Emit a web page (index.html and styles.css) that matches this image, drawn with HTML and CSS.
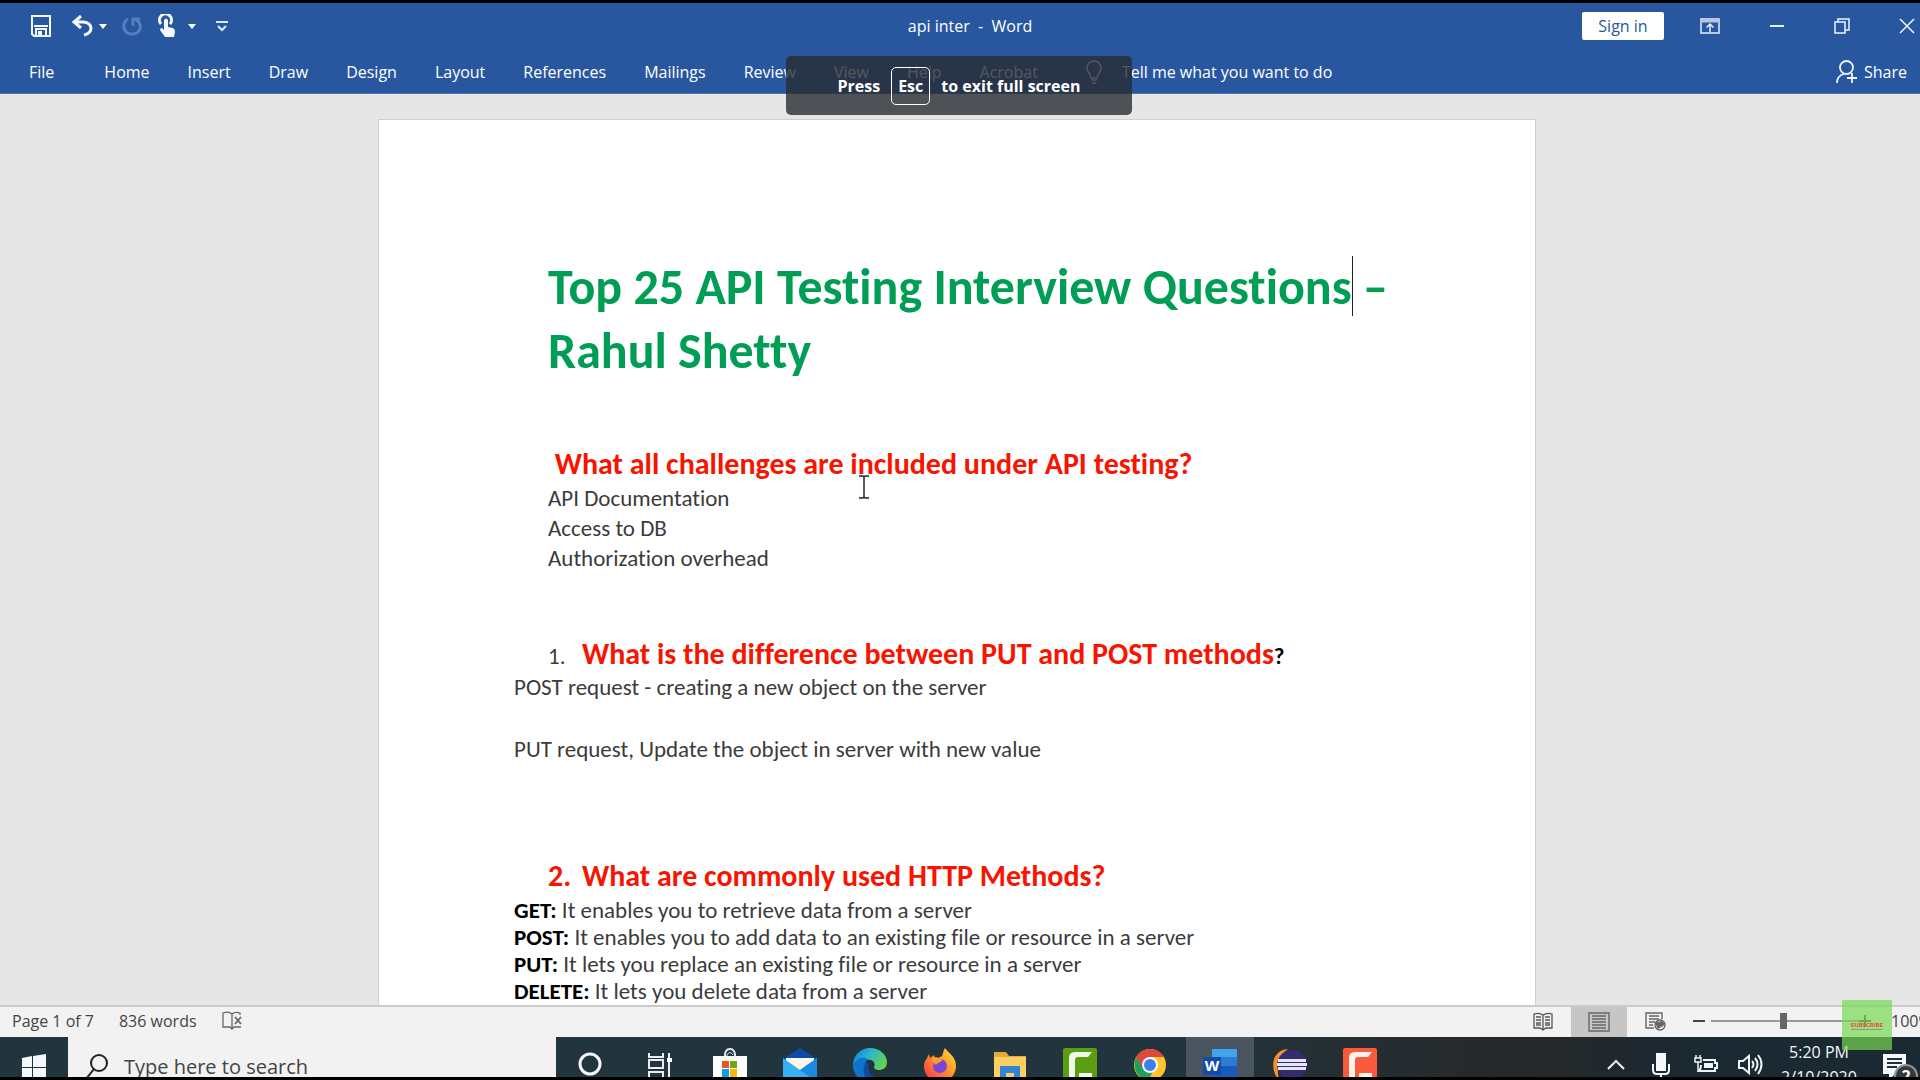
FILE: index.html
```html
<!DOCTYPE html>
<html lang="en">
<head>
<meta charset="utf-8">
<meta name="viewport" content="width=device-width, initial-scale=1">
<title>api inter - Word</title>
<link rel="stylesheet" href="styles.css">
</head>
<body>
<div class="screen">
  <header class="ribbon">
    <div class="titlebar">
      <div class="quick">
        <button class="icon-btn save" aria-label="Save"><svg width="20" height="22" viewBox="0 0 20 22" fill="none" stroke="#f4f8ff" stroke-width="2"><path d="M1 1h18v20H3l-2-2z"/><path d="M3 11h14M5 21v-7h10v7"/><path d="M8 21v-4h2v4"/></svg></button>
        <button class="icon-btn undo" aria-label="Undo"><svg width="22" height="22" viewBox="0 0 22 22" fill="none" stroke="#f4f8ff" stroke-width="3"><path d="M10 1L3 7l7 6M3 7h9c5 0 8 3 8 6 0 4-3 6-7 7"/></svg></button>
        <button class="icon-btn undo-more" aria-label="Undo options"><svg width="8" height="5" viewBox="0 0 8 5" fill="#fff"><path d="M0 0h8L4 5z"/></svg></button>
        <button class="icon-btn redo" aria-label="Redo"><svg width="20" height="20" viewBox="0 0 20 20" fill="none" stroke="#5580bf" stroke-width="3"><path d="M6 3C-1 7 1 18 10 18s11-10 4-14M11 10V3h7"/></svg></button>
        <button class="icon-btn touch" aria-label="Touch mode"><svg width="18" height="24" viewBox="0 0 18 24"><path d="M3 10a6 6 0 1 1 9 0" fill="none" stroke="#f4f8ff" stroke-width="3"/><path d="M6 6q2-3 4 0v7l5 1q2 1 2 4l-1 5H7l-5-7q0-2 2-2l2 2z" fill="#f4f8ff"/></svg></button>
        <button class="icon-btn touch-more" aria-label="Touch options"><svg width="8" height="5" viewBox="0 0 8 5" fill="#fff"><path d="M0 0h8L4 5z"/></svg></button>
        <button class="icon-btn" aria-label="Customize toolbar"><svg width="12" height="11" viewBox="0 0 12 11" fill="none" stroke="#dfeaff" stroke-width="2"><path d="M0 1h12"/><path d="M2 5l4 4 4-4"/></svg></button>
      </div>
      <div class="doc-name">api inter&nbsp; -&nbsp; Word</div>
      <div class="window-tools">
        <button class="signin">Sign in</button>
        <button class="icon-btn" aria-label="Ribbon display options"><svg width="20" height="16" viewBox="0 0 20 16" fill="none" stroke="#e4eeff" stroke-width="1.5"><path d="M1 1h18v14H1z"/><path d="M1 3h18" stroke-width="3" stroke="#b9c5d8"/><path d="M10 14V6M6.500 9.500L10 6l3.500 3.500"/></svg></button>
        <button class="icon-btn" aria-label="Minimize"><svg width="16" height="16" viewBox="0 0 16 16"><path d="M1 8h14" stroke="#e4eeff" stroke-width="2"/></svg></button>
        <button class="icon-btn" aria-label="Restore"><svg width="16" height="16" viewBox="0 0 16 16" fill="none" stroke="#f0f5ff" stroke-width="1.500"><path d="M1 4h10v11H1zM4 4V1h11v11h-4"/></svg></button>
        <button class="icon-btn" aria-label="Close"><svg width="16" height="16" viewBox="0 0 16 16" stroke="#f0f5ff" stroke-width="1.500"><path d="M1 1l14 14M15 1L1 15"/></svg></button>
      </div>
    </div>
    <div class="tabrow">
      <nav class="tabs">
        <a class="file" href="#">File</a><a href="#">Home</a><a href="#">Insert</a><a href="#">Draw</a><a href="#">Design</a><a href="#">Layout</a><a href="#">References</a><a href="#">Mailings</a><a href="#">Review</a><a href="#">View</a><a href="#">Help</a><a href="#">Acrobat</a>
      </nav>
      <label class="tell">
        <svg width="16" height="24" viewBox="0 0 16 24" fill="none" stroke="#fff" stroke-width="1.500"><path d="M5 18c0-5-4-5-4-10a7 7 0 0 1 14 0c0 5-4 5-4 10zM5 20h6M6 23h4"/></svg>
        <input type="text" placeholder="Tell me what you want to do" aria-label="Tell me what you want to do">
      </label>
      <button class="share"><svg width="22" height="24" viewBox="0 0 22 24" fill="none" stroke="#f0f5ff" stroke-width="1.800"><ellipse cx="10.500" cy="7.500" rx="6.500" ry="6.500"/><path d="M1 23c0-5 3-8 7-9M16 13v10M11 18h10"/></svg>Share</button>
    </div>
  </header>

  <main class="canvas">
    <article class="page">
      <h1>Top 25 API Testing Interview Questions<span class="caret"></span> – Rahul Shetty</h1>
      <section class="intro">
        <h2>&nbsp;What all challenges are included under API testing?</h2>
        <p>API Documentation</p>
        <p>Access to DB</p>
        <p>Authorization overhead</p>
        <span class="ibeam"><svg width="12" height="24" viewBox="0 0 12 24" fill="none" stroke="#222" stroke-width="1.500"><path d="M1 1h4l1 1 1-1h4M6 2v20M1 23h4l1-1 1 1h4"/></svg></span>
      </section>
      <section class="methods">
        <h2><span class="num plain">1.</span><span>What is the difference between PUT and POST methods<span class="mark">?</span></span></h2>
        <p>POST request - creating a new object on the server</p>
        <p class="spaced">PUT request, Update the object in server with new value</p>
      </section>
      <section class="http">
        <h2><span class="num">2.</span><span>What are commonly used HTTP Methods?</span></h2>
        <p><b>GET:</b> It enables you to retrieve data from a server</p>
        <p><b>POST:</b> It enables you to add data to an existing file or resource in a server</p>
        <p><b>PUT:</b> It lets you replace an existing file or resource in a server</p>
        <p><b>DELETE:</b> It lets you delete data from a server</p>
      </section>
    </article>
  </main>

  <footer class="status">
    <span class="pages">Page 1 of 7</span>
    <span class="words">836 words</span>
    <button class="icon-btn" aria-label="Proofing"><svg width="21" height="20" viewBox="0 0 21 20" fill="none" stroke="#666" stroke-width="1.300"><path d="M10 3v14M10 3C8 1 4 1 1 2v14h7l2 2 2-2h7M10 3c2-2 5-2 8-1v2"/><path d="M13 6l6 7M19 6l-6 7" stroke-width="1.800"/></svg></button>
    <div class="views">
      <button aria-label="Read mode"><svg width="20" height="20" viewBox="0 0 20 20" fill="none" stroke="#555" stroke-width="1.300"><path d="M10 3v15M10 3C7 1 4 1 1 2v14h6l3 2 3-2h6V2c-3-1-6-1-9 1zM3 5h5M3 8h5M3 11h5M3 13h5M12 5h5M12 8h5M12 11h5M12 13h5"/></svg></button>
      <button class="active" aria-label="Print layout"><svg width="22" height="20" viewBox="0 0 22 20" fill="none" stroke="#666" stroke-width="1.400"><path d="M1 1h20v18H1zM4 4h14M4 7h14M4 10h14M4 13h14M4 16h14"/></svg></button>
      <button aria-label="Web layout"><svg width="21" height="20" viewBox="0 0 21 20" fill="none" stroke="#666" stroke-width="1.400"><path d="M17 7V1H1v15h8M4 4h10M4 7h10M4 10h6M4 13h4"/><circle cx="15" cy="13" r="5"/><path d="M11 11l3-1 2 2-1 3-2 1zM16 9l3 3-2 2z" fill="#666"/></svg></button>
    </div>
    <div class="zoom">
      <button class="minus" aria-label="Zoom out"><svg width="12" height="12" viewBox="0 0 12 12"><path d="M0 6h12" stroke="#444" stroke-width="2"/></svg></button>
      <input type="range" min="0" max="100" value="49" aria-label="Zoom">
      <button class="plus" aria-label="Zoom in"><svg width="12" height="12" viewBox="0 0 12 12"><path d="M0 6h12M6 0v12" stroke="#444" stroke-width="2"/></svg></button>
      <span class="pct">100%</span>
    </div>
    <div class="subscribe"><span>SUBSCRIBE</span></div>
  </footer>

  <div class="taskbar">
    <button class="start" aria-label="Start"><svg width="24" height="26" viewBox="0 0 24 26" fill="#f4f8fb"><path d="M0 4l10-2v11H0zM11 2l13-2v13H11zM0 14h10v11L0 23zM11 14h13v12l-13-1z"/></svg></button>
    <label class="search">
      <svg width="22" height="28" viewBox="0 0 22 28" fill="none" stroke="#222" stroke-width="2"><circle cx="13" cy="9" r="8"/><path d="M8 15L0 25"/></svg>
      <input type="text" placeholder="Type here to search" aria-label="Search">
    </label>
    <div class="apps">
      <button aria-label="Cortana"><svg width="24" height="30" viewBox="0 0 24 30"><circle cx="12" cy="16" r="10" fill="none" stroke="#f4f8fb" stroke-width="3"/></svg></button>
      <button aria-label="Task view"><svg width="26" height="30" viewBox="0 0 26 30" fill="none" stroke="#e8eef2" stroke-width="2"><path d="M2 5v4h14V5M2 12h14v8H2zM2 30v-6h14v6M22 5v25"/><path d="M20 10h5v4h-5z" fill="#fff" stroke="none"/></svg></button>
      <button aria-label="Store"><svg width="34" height="34" viewBox="0 0 34 34"><path d="M12 10V6q1-5 5-5t5 5v4" fill="none" stroke="#dfe6ea" stroke-width="2"/><path d="M14 10V7q3-5 6 0" fill="none" stroke="#dfe6ea"/><path d="M0 8h34v26H0z" fill="#fff"/><path d="M9 13h7v7H9z" fill="#f05022"/><path d="M17 13h7v7h-7z" fill="#6ea91b"/><path d="M9 21h7v8H9z" fill="#0aa4ea"/><path d="M17 21h7v8h-7z" fill="#fbb40a"/></svg></button>
      <button aria-label="Mail"><svg width="34" height="34" viewBox="0 0 34 34"><path d="M0 11L17 0l17 11v23H0z" fill="#0a4fa5"/><path d="M3 10h28v14H3z" fill="#fff8ec"/><path d="M0 10l17 12 17-12v24H0z" fill="#35b0f2"/><path d="M17 22l17-12v24z" fill="#1a8be0"/></svg></button>
      <button aria-label="Edge"><svg width="34" height="34" viewBox="0 0 34 34"><defs><linearGradient id="edge-top" x1="0" y1="0" x2="1" y2=".4"><stop offset="0" stop-color="#0f7fd0"/><stop offset=".5" stop-color="#2cb4cf"/><stop offset="1" stop-color="#63d052"/></linearGradient></defs><path d="M0 17C0 7 8 0 17 0c10 0 17 7 17 14 0 6-4 8-8 8-4 0-5-2-5-3 2-3-1-8-6-7C8 12 3 17 4 25 1 23 0 20 0 17z" fill="url(#edge-top)"/><path d="M0 17c3-7 10-9 15-6-4 3-4 10-1 14 3 5 9 6 14 4-3 4-7 5-11 5C7 34 0 27 0 17z" fill="#1273cd"/><path d="M13 14c-4 6-3 14 3 20h3c4 0 7-2 9-5-8 2-15-5-12-13z" fill="#0c4c9c"/></svg></button>
      <button aria-label="Firefox"><svg width="34" height="34" viewBox="0 0 34 34"><defs><linearGradient id="fox" x1="1" y1="0" x2="0" y2="1"><stop offset="0" stop-color="#ffe83c"/><stop offset=".45" stop-color="#ff9127"/><stop offset="1" stop-color="#f72b56"/></linearGradient></defs><path d="M6 6l1 4 4-3 1 4c3-2 5-1 7-3 1-2 1-5 3-8 3 5 11 8 11 18 0 9-7 16-16 16S1 27 1 18c0-5 3-7 5-12z" fill="url(#fox)"/><circle cx="17" cy="18" r="7" fill="#7a45d8"/><path d="M9 10c4-3 6 1 10 1 1 3-4 3-6 6-2-2-4-4-4-7z" fill="#ff9b2b"/></svg></button>
      <button aria-label="File Explorer"><svg width="32" height="34" viewBox="0 0 32 34"><path d="M0 4h12l3 4h17v26H0z" fill="#e5a93c"/><path d="M0 9h32v25H0z" fill="#fdcf62"/><path d="M6 34V18h20v16h-6v-9h-8v9z" fill="#2f86d6"/></svg></button>
      <button aria-label="Camtasia"><svg width="34" height="34" viewBox="0 0 34 34"><rect width="34" height="34" rx="2" fill="#5c9e12"/><path d="M29 4H12q-6 0-6 6v24h6V12q0-3 3-3h10zM29 25H16v5h13z" fill="#f1f7ea"/></svg></button>
      <button aria-label="Chrome"><svg width="32" height="34" viewBox="0 0 32 34"><circle cx="16" cy="17" r="16" fill="#fdc62c"/><path d="M2 9Q7 1 16 1t14 8H16l-7 12z" fill="#de4a3a"/><path d="M2 9C-2 18 2 30 14 33l6-12H10z" fill="#22a05a"/><circle cx="16" cy="17" r="8" fill="#f5f8ff"/><circle cx="16" cy="17" r="6" fill="#3f80ee"/></svg></button>
      <button class="current" aria-label="Word"><svg width="34" height="34" viewBox="0 0 34 34"><path d="M9 1h25v8H9z" fill="#41a5ee"/><path d="M9 9h25v9H9z" fill="#2b7cd3"/><path d="M9 18h25v16H9z" fill="#185abd"/><rect y="9" width="18" height="18" fill="#114da8"/><text x="9" y="23" text-anchor="middle" class="w-mark">W</text></svg></button>
      <button aria-label="Eclipse"><svg width="34" height="34" viewBox="0 0 34 34"><path d="M15 1C-2 2-4 22 7 34 3 24 4 9 15 1z" fill="#f3912a"/><circle cx="19" cy="17" r="15" fill="#352b70"/><path d="M5 11h28v3H5zM4 15h30v3H4zM5 19h28v3H5z" fill="#e6e6f2"/></svg></button>
      <button aria-label="Recorder"><svg width="34" height="34" viewBox="0 0 34 34"><rect width="34" height="34" rx="2" fill="#fa5a3c"/><path d="M29 4H12q-6 0-6 6v24h6V12q0-3 3-3h10zM29 25H16v5h13z" fill="#fff1ec"/></svg></button>
    </div>
    <div class="tray">
      <button aria-label="Show hidden icons"><svg width="20" height="24" viewBox="0 0 20 24" fill="none" stroke="#eef3f6" stroke-width="2"><path d="M2 17l8-8 8 8"/></svg></button>
      <button aria-label="Microphone"><svg width="18" height="26" viewBox="0 0 18 26" fill="none" stroke="#f4f8fb" stroke-width="2"><rect x="5" y="2" width="8" height="16" fill="#f4f8fb"/><path d="M1 12v6q0 4 4 4h8q4 0 4-4v-6M9 22v4"/></svg></button>
      <button aria-label="Battery"><svg width="24" height="24" viewBox="0 0 24 24" fill="none" stroke="#eef3f6" stroke-width="2"><path d="M9 8h12v3h2v5h-2v3H5q2-2 2-6"/><path d="M10 11h9v5h-9z" fill="#eef3f6" stroke="none"/><path d="M1 6h6v4H1zM4 10v9M2 3v3M6 3v3" stroke-width="1.500"/></svg></button>
      <button aria-label="Volume"><svg width="26" height="24" viewBox="0 0 26 24" fill="none" stroke="#eef3f6" stroke-width="2"><path d="M1 9h4l6-5v17l-6-5H1zM14 9q3 3 0 7M17 6q5 6 0 13M20 3q7 9 0 19"/></svg></button>
      <time class="clock">5:20 PM<br>2/10/2020</time>
      <button class="notes" aria-label="Notifications"><svg width="36" height="30" viewBox="0 0 36 30"><path d="M1 2h23v20H13l-6 6v-6H1z" fill="#f4f8fb"/><path d="M5 7h15M5 11h15M5 15h10" stroke="#22303a" stroke-width="2"/><circle cx="24" cy="24" r="11" fill="#34393d" stroke="#8d9498" stroke-width="2"/><text x="24" y="30" text-anchor="middle" class="badge">2</text></svg></button>
    </div>
  </div>

  <div class="toast" role="status"><span>Press</span><kbd>Esc</kbd><span>to exit full screen</span></div>
</div>
</body>
</html>
```
FILE: styles.css
```css
* { box-sizing: border-box; }

body {
  margin: 0;
  font: 16px/24px "Open Sans", "Noto Sans", sans-serif;
}

button, input {
  margin: 0;
  padding: 0;
  border: 0;
  background: none;
  color: inherit;
  font: inherit;
}

a { color: inherit; text-decoration: none; }
svg { display: block; flex: none; }
h1, h2, p { margin: 0; }

.screen {
  position: relative;
  display: flex;
  flex-direction: column;
  height: 100vh;
  overflow: hidden;
  border-top: 3px solid #000;
  border-bottom: 3px solid #000;
}

/* Ribbon */
.ribbon {
  flex: none;
  background: #28579f;
  border-bottom: 1px solid #4a70b4;
  color: #fff;
}

.titlebar {
  display: grid;
  grid-template-columns: 1fr auto 1fr;
  align-items: center;
  height: 46px;
  padding: 0 5px 0 25px;
}

.quick { display: flex; align-items: center; padding-left: 6px; }
.icon-btn { display: flex; }
.save { margin-right: 20px; }
.undo { margin-right: 6px; }
.undo-more { margin-right: 15px; }
.redo { margin-right: 16px; }
.touch { margin-right: 12px; }
.touch-more { margin-right: 20px; }

.window-tools {
  display: flex;
  align-items: center;
  justify-content: flex-end;
  gap: 49px;
}

.signin {
  width: 82px;
  height: 28px;
  margin-right: -13px;
  background: #fff;
  border-radius: 2px;
  color: #2b579a;
}

.tabrow {
  display: flex;
  align-items: center;
  height: 44px;
  padding: 2px 13px 0 29px;
}

.tabs { display: flex; gap: 38px; }
.file { margin-right: 12px; }

.tell {
  display: flex;
  align-items: center;
  gap: 20px;
  margin-left: 48px;
}
.tell input { width: 240px; }
.tell input::placeholder { color: #fff; opacity: 1; }

.share {
  display: flex;
  align-items: center;
  gap: 6px;
  margin-left: auto;
}

/* Document */
.canvas {
  flex: 1;
  min-height: 0;
  overflow: hidden;
  padding: 25px 6px 0 0;
  background: #e6e6e6;
}

.page {
  max-width: 1158px;
  min-height: 1200px;
  margin: 0 auto;
  padding: 135px 135px 0;
  border: 1px solid #cfcfcf;
  background: #fff;
  color: #3b3b3b;
  font: 23px/30px Carlito, Calibri, Lato, sans-serif;
  font-variant-ligatures: none;
}

.page h1 {
  padding-left: 34px;
  margin-bottom: 64px;
  color: #009e55;
  font-size: 50px;
  line-height: 64px;
}

.page h2 {
  display: flex;
  margin-bottom: 2px;
  color: #f81400;
  font-size: 30px;
  line-height: 34px;
}

.page b { color: #000; }

.caret { position: relative; }
.caret::after {
  content: "";
  position: absolute;
  top: 0;
  left: 0;
  width: 1px;
  height: 60px;
  background: #222;
}

.intro { position: relative; padding-left: 34px; }
.ibeam { position: absolute; top: 28px; left: 344px; }

.methods { margin-top: 65px; }
.methods h2, .http h2 { padding-left: 34px; }
.page .methods h2 { margin-bottom: 0; line-height: 32px; }
.num { width: 34px; }
.plain { height: 32px; color: #3b3b3b; font-size: 23px; font-weight: 400; line-height: 36px; }
.mark { color: #000; font-size: 23px; }
.spaced { margin-top: 32px; }

.http { margin-top: 95px; line-height: 27px; }
.page .http h2 { margin-bottom: 4px; }

/* Status bar */
.status {
  position: relative;
  display: flex;
  flex: none;
  align-items: center;
  height: 32px;
  padding: 0 0 2px 12px;
  background: #f2f2f2;
  border-top: 2px solid #cbcbcb;
  color: #444;
}
.pages { margin-right: 25px; }
.words { margin-right: 25px; }
.views { display: flex; align-self: stretch; margin: 0 0 -2px auto; }
.views button {
  display: flex;
  align-items: center;
  justify-content: center;
  width: 56px;
}
.views .active { background: #c6c6c6; }

.zoom { display: flex; align-items: center; width: 237px; padding-left: 10px; }
.minus { margin-right: 6px; }
.zoom input {
  flex: none;
  width: 148px;
  height: 16px;
  appearance: none;
}
.zoom input::-webkit-slider-runnable-track {
  height: 16px;
  background: linear-gradient(#999, #999) center / 100% 2px no-repeat;
}
.zoom input::-webkit-slider-thumb {
  appearance: none;
  width: 7px;
  height: 16px;
  background: #666;
}
.pct { margin-left: 20px; }

.subscribe {
  position: absolute;
  top: -7px;
  right: 28px;
  z-index: 2;
  display: flex;
  align-items: center;
  justify-content: center;
  width: 50px;
  height: 50px;
  background: rgba(120, 216, 86, .7);
  color: #f0492e;
  font: 700 6px/8px "Open Sans", sans-serif;
}
.subscribe span { border-bottom: 1px solid #8a9a86; }

/* Taskbar */
.taskbar {
  display: flex;
  flex: none;
  height: 40px;
  overflow: hidden;
  background: linear-gradient(90deg, #22343d 0 62%, #262a2c 76%, #262829 80%, #1b2932 88%);
}

.start { width: 68px; padding: 17px 22px 0; flex: none; align-self: flex-start; }

.search {
  display: flex;
  align-items: flex-start;
  gap: 16px;
  width: 488px;
  padding: 17px 18px 0;
  background: #f2f2f2;
}
.search input { width: 300px; height: 26px; color: #444; font-size: 20px; line-height: 26px; }
.search input::placeholder { color: #444; opacity: 1; }

.apps { display: flex; gap: 2px; }
.apps button, .tray button {
  display: flex;
  align-items: flex-start;
  justify-content: center;
}
.apps button { width: 68px; padding-top: 11px; }
.apps .current { background: #4b555f; }
.w-mark { fill: #fff; font: 700 15px "Open Sans", sans-serif; }

.tray { display: flex; margin-left: auto; color: #f4f8fb; }
.tray button { width: 45px; padding-top: 15px; }
.clock {
  width: 92px;
  padding-top: 3px;
  text-align: center;
  line-height: 25px;
}
.tray .notes { width: 55px; padding-left: 14px; }
.badge { fill: #fff; font: 700 16px "Open Sans", sans-serif; }

/* Full screen notice */
.toast {
  position: absolute;
  top: 53px;
  right: 2px;
  left: 0;
  display: flex;
  align-items: center;
  justify-content: center;
  gap: 11px;
  width: 346px;
  height: 59px;
  margin: 0 auto;
  background: rgba(40, 44, 49, .8);
  border-radius: 5px;
  color: #fff;
  font-weight: 700;
}
.toast kbd {
  padding: 6px;
  border: 1px solid #fff;
  border-radius: 5px;
  font: inherit;
}
```
